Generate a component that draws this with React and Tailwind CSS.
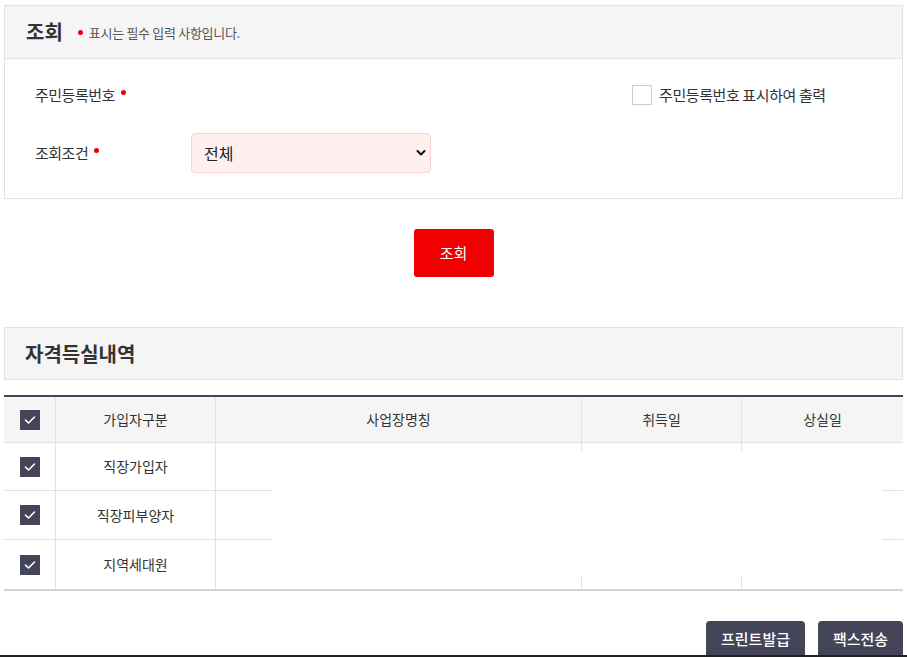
import React from "react";

const F = { fontFamily: '"Noto Sans CJK KR", "Noto Sans", sans-serif' };

function Dot() {
  return <span className="inline-block w-[5px] h-[5px] rounded-full bg-[#e60012]" />;
}

function Check() {
  return (
    <span className="inline-flex w-[20px] h-[20px] items-center justify-center bg-[#454559]">
      <svg width="12" height="10" viewBox="0 0 12 10" fill="none">
        <path d="M1.5 5.2 L4.5 8 L10.5 2" stroke="#fff" strokeWidth="1.6" strokeLinecap="round" strokeLinejoin="round" />
      </svg>
    </span>
  );
}

const rows = ["직장가입자", "직장피부양자", "지역세대원"];

export default function App() {
  return (
    <div className="w-[907px] h-[657px] overflow-hidden bg-white text-[#333]" style={F}>
      <div className="px-[4px] pt-[5px]">
        {/* 조회 panel */}
        <div className="border border-[#e2e2e2]">
          <div className="h-[53px] bg-[#f5f5f5] border-b border-[#e2e2e2] flex items-center pl-[21px]">
            <span className="text-[20px] font-bold text-[#333] leading-none">조회</span>
            <span className="ml-[15px] mr-[6px] flex items-center"><Dot /></span>
            <span className="text-[13px] tracking-[-0.3px] text-[#555] mt-[2px]">표시는 필수 입력 사항입니다.</span>
          </div>
          <div className="pl-[30px] pt-[16px] pb-[25px]">
            <div className="h-[40px] flex items-center">
              <div className="w-[156px] flex items-center text-[15px] tracking-[-0.5px] text-[#333]">
                <span>주민등록번호</span>
                <span className="ml-[6px] -mt-[6px] flex"><Dot /></span>
              </div>
              <label className="ml-[441px] flex items-center">
                <span className="w-[20px] h-[20px] border border-[#ccc] bg-white" />
                <span className="ml-[7px] text-[15px] tracking-[-0.4px] text-[#333]">주민등록번호 표시하여 출력</span>
              </label>
            </div>
            <div className="h-[40px] mt-[18px] flex items-center">
              <div className="w-[156px] flex items-center text-[15px] tracking-[-0.5px] text-[#333]">
                <span>조회조건</span>
                <span className="ml-[6px] -mt-[6px] flex"><Dot /></span>
              </div>
              <div className="relative w-[240px] h-[40px] rounded-[4px] border border-[#fdd0d0] bg-[#fff0f0] flex items-center pl-[12px]">
                <span className="text-[16px] text-[#222] font-normal">전체</span>
                <svg className="absolute right-[4px] top-[15px]" width="10" height="8" viewBox="0 0 10 8" fill="none">
                  <path d="M1.5 2 L5 5.5 L8.5 2" stroke="#111" strokeWidth="2" strokeLinecap="round" strokeLinejoin="round" />
                </svg>
              </div>
            </div>
          </div>
        </div>

        {/* 조회 button */}
        <div className="flex justify-center mt-[30px]">
          <button className="w-[80px] h-[48px] rounded-[3px] bg-[#f00000] text-white text-[15px]">조회</button>
        </div>

        {/* 자격득실내역 */}
        <div className="mt-[50px] h-[53px] border border-[#e2e2e2] bg-[#f5f5f5] flex items-center pl-[20px]">
          <span className="text-[20px] font-bold text-[#333]">자격득실내역</span>
        </div>

        {/* table */}
        <div className="relative mt-[15px] border-t-2 border-[#454559] border-b-2 border-b-[#d2d4d8]">
          <div className="grid grid-cols-[52px_160px_366px_160px_161px] h-[46px] bg-[#f5f5f5] border-b border-[#e2e2e2] text-[14px] text-[#333]">
            <div className="flex items-center justify-center border-r border-[#e2e2e2]"><Check /></div>
            <div className="flex items-center justify-center border-r border-[#e2e2e2]">가입자구분</div>
            <div className="flex items-center justify-center border-r border-[#e2e2e2]">사업장명칭</div>
            <div className="flex items-center justify-center border-r border-[#e2e2e2]">취득일</div>
            <div className="flex items-center justify-center">상실일</div>
          </div>
          {rows.map((r, i) => (
            <div
              key={r}
              className={`grid grid-cols-[52px_160px_366px_160px_161px] ${i === 0 ? "h-[48px]" : "h-[49px]"} text-[14px] text-[#333] ${i < rows.length - 1 ? "border-b border-[#e2e2e2]" : ""}`}
            >
              <div className="flex items-center justify-center border-r border-[#e2e2e2]"><Check /></div>
              <div className="flex items-center justify-center border-r border-[#e2e2e2]">{r}</div>
              <div className="border-r border-[#e2e2e2]" />
              <div className="border-r border-[#e2e2e2]" />
              <div />
            </div>
          ))}
          <div className="absolute left-[268px] top-[54px] w-[610px] h-[124px] bg-white" />
        </div>

        {/* bottom buttons */}
        <div className="flex justify-end gap-[13px] mt-[30px]">
          <button className="w-[99px] h-[34px] rounded-t-[4px] bg-[#454559] text-white text-[15px] font-medium pt-[2px]">프린트발급</button>
          <button className="w-[85px] h-[34px] rounded-t-[4px] bg-[#454559] text-white text-[15px] font-medium pt-[2px]">팩스전송</button>
        </div>
      </div>
      <div className="h-[2px] bg-[#222]" />
    </div>
  );
}
